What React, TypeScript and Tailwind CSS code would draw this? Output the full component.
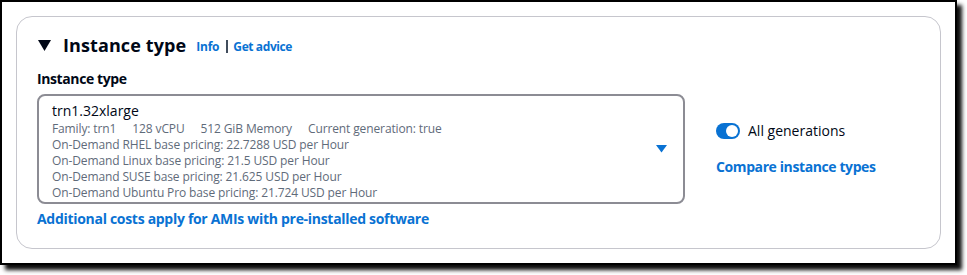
import React from "react";

export default function App() {
  const font = { fontFamily: '"Open Sans", "Noto Sans", Arial, sans-serif' };
  const detail = "text-[12px] leading-[16px] text-[#5f6b7a] tracking-[-0.12px]";
  return (
    <div className="bg-white w-[967px] h-[275px]" style={font}>
      <div className="w-[957px] h-[265px] border-2 border-black bg-white shadow-[5px_5px_4px_rgba(0,0,0,0.95)] p-[14px]">
        <div className="h-[233px] rounded-[16px] border border-[#c6c6cd] px-[20px] pt-[17px]">
          <div className="flex items-center h-[22px]">
            <svg width="13" height="12" viewBox="0 0 13 12" className="ml-[1px] mr-[12px]">
              <polygon points="0,1 13,1 6.5,12" fill="#000716" />
            </svg>
            <span className="text-[18px] leading-[22px] font-bold text-[#000716] tracking-[0.1px]">Instance type</span>
            <span className="ml-[10px] text-[12px] font-bold text-[#0972d3] mt-[3px] tracking-[-0.2px]">Info</span>
            <div className="ml-[7px] mr-[5px] w-[2px] h-[13px] bg-[#414d5c] mt-[3px]" />
            <span className="text-[12px] font-bold text-[#0972d3] mt-[3px] tracking-[-0.4px]">Get advice</span>
          </div>
          <div className="mt-[12px] text-[14px] leading-[22px] font-bold text-[#000716] tracking-[-0.4px]">Instance type</div>
          <div className="mt-[4px] flex items-center">
            <div className="w-[648px] h-[110px] rounded-[8px] border-2 border-[#8c8c94] pl-[13px] pr-[16px] pt-[3px] flex items-center">
              <div className="flex-1">
                <div className="text-[14px] leading-[20px] text-[#000716]">trn1.32xlarge</div>
                <div className={detail + " flex gap-[16px]"}>
                  <span>Family: trn1</span>
                  <span>128 vCPU</span>
                  <span>512 GiB Memory</span>
                  <span>Current generation: true</span>
                </div>
                <div className={detail}>On-Demand RHEL base pricing: 22.7288 USD per Hour</div>
                <div className={detail}>On-Demand Linux base pricing: 21.5 USD per Hour</div>
                <div className={detail}>On-Demand SUSE base pricing: 21.625 USD per Hour</div>
                <div className={detail}>On-Demand Ubuntu Pro base pricing: 21.724 USD per Hour</div>
              </div>
              <svg width="11" height="8" viewBox="0 0 11 8" className="mt-[-4px]">
                <polygon points="0,0 11,0 5.5,7.5" fill="#0972d3" />
              </svg>
            </div>
            <div className="ml-[31px] flex flex-col gap-[16px]">
              <div className="flex items-center h-[20px]">
                <div className="w-[24px] h-[16px] rounded-full bg-[#0972d3] relative">
                  <div className="absolute right-[2px] top-[2px] w-[12px] h-[12px] rounded-full bg-white" />
                </div>
                <span className="ml-[8px] text-[14px] leading-[20px] text-[#000716]">All generations</span>
              </div>
              <div className="text-[14px] leading-[20px] font-bold text-[#0972d3] tracking-[-0.4px]">Compare instance types</div>
            </div>
          </div>
          <div className="mt-[5px] text-[14px] leading-[20px] font-bold text-[#0972d3] tracking-[-0.3px]">Additional costs apply for AMIs with pre-installed software</div>
        </div>
      </div>
    </div>
  );
}
